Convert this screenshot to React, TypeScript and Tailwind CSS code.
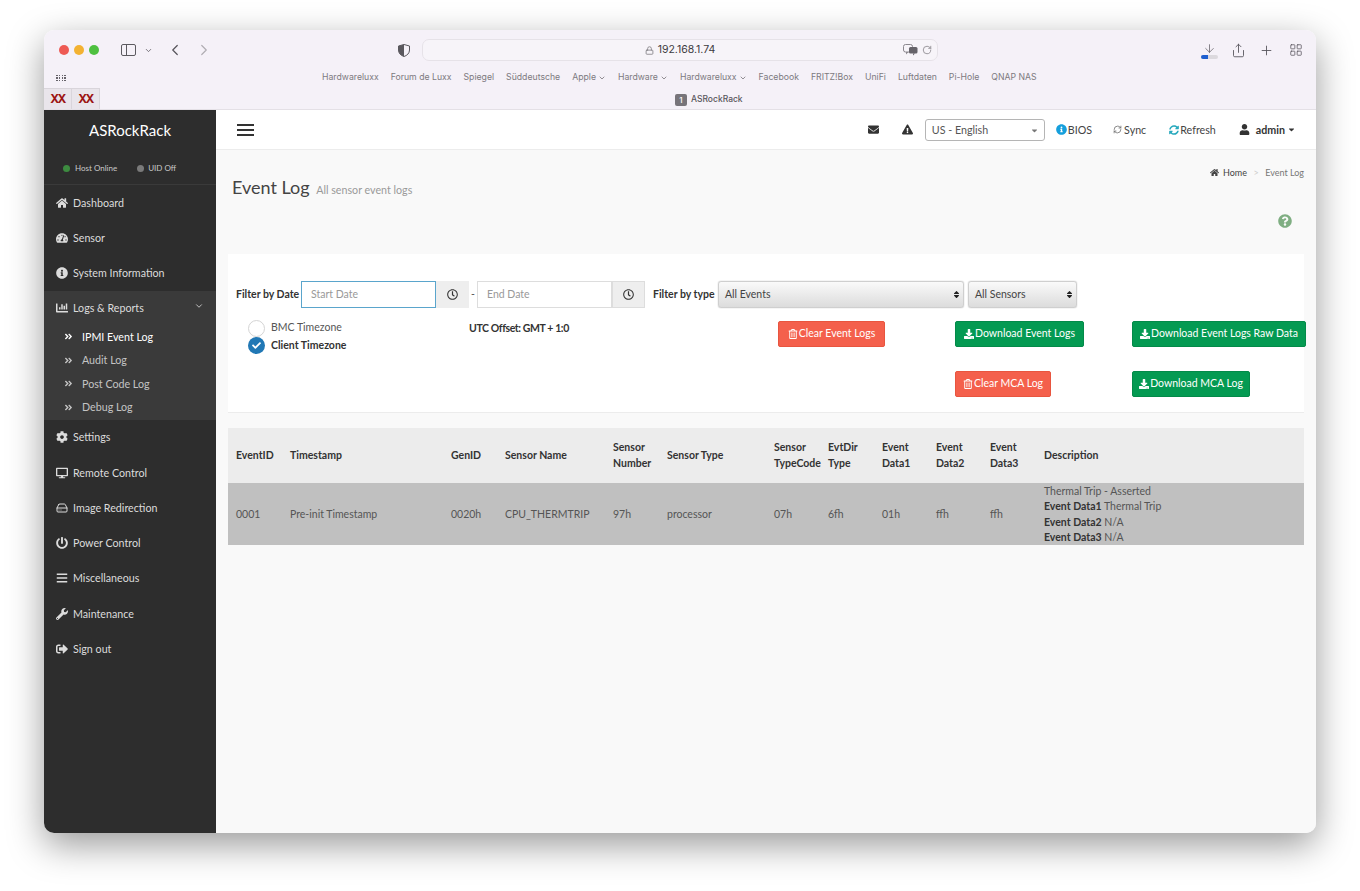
import {
  FaHome, FaTachometerAlt, FaInfoCircle, FaChartBar, FaAngleDoubleRight, FaCog, FaDesktop,
  FaPowerOff, FaBars, FaWrench, FaSignOutAlt, FaEnvelope, FaExclamationTriangle, FaSyncAlt,
  FaUser, FaQuestionCircle, FaRegTrashAlt, FaDownload, FaRegClock, FaCheck, FaCaretDown, FaSort,
} from "react-icons/fa"
import { ArrowDown, ChevronDown, ChevronLeft, ChevronRight, HardDrive, Lock, Plus, RefreshCw, RotateCw, Share, LayoutGrid } from "lucide-react"

const font = "font-['Lato','Liberation_Sans',sans-serif]"

const topMenu = [
  { label: "Dashboard", icon: <FaHome /> },
  { label: "Sensor", icon: <FaTachometerAlt /> },
  { label: "System Information", icon: <FaInfoCircle /> },
]
const bottomMenu = [
  { label: "Settings", icon: <FaCog /> },
  { label: "Remote Control", icon: <FaDesktop /> },
  { label: "Image Redirection", icon: <HardDrive size={12} strokeWidth={2} /> },
  { label: "Power Control", icon: <FaPowerOff /> },
  { label: "Miscellaneous", icon: <FaBars /> },
  { label: "Maintenance", icon: <FaWrench /> },
  { label: "Sign out", icon: <FaSignOutAlt /> },
]
const subMenu = ["IPMI Event Log", "Audit Log", "Post Code Log", "Debug Log"]
const bookmarks = [
  { label: "Hardwareluxx" }, { label: "Forum de Luxx" }, { label: "Spiegel" }, { label: "Süddeutsche" },
  { label: "Apple", menu: true }, { label: "Hardware", menu: true }, { label: "Hardwareluxx", menu: true },
  { label: "Facebook" }, { label: "FRITZ!Box" }, { label: "UniFi" }, { label: "Luftdaten" }, { label: "Pi-Hole" }, { label: "QNAP NAS" },
]
const columns = [
  { label: "EventID", width: "w-[54px]", value: "0001" },
  { label: "Timestamp", width: "w-[161px]", value: "Pre-init Timestamp" },
  { label: "GenID", width: "w-[54px]", value: "0020h" },
  { label: "Sensor Name", width: "w-[108px]", value: "CPU_THERMTRIP" },
  { label: "Sensor Number", width: "w-[54px]", value: "97h" },
  { label: "Sensor Type", width: "w-[107px]", value: "processor" },
  { label: "Sensor TypeCode", width: "w-[54px]", value: "07h" },
  { label: "EvtDir Type", width: "w-[54px]", value: "6fh" },
  { label: "Event Data1", width: "w-[54px]", value: "01h" },
  { label: "Event Data2", width: "w-[54px]", value: "ffh" },
  { label: "Event Data3", width: "w-[54px]", value: "ffh" },
]

function Toolbar() {
  return (
    <div className="h-[80px] shrink-0 bg-[#f5f1f8] border-b border-[#e4e0e6] font-['Inter',sans-serif] text-[#55525a]">
      {/* Address row */}
      <div className="h-[39px] pt-[1px] flex items-center">
        <div className="ml-[15px] flex gap-[5px]">
          <span className="w-[10px] h-[10px] rounded-full bg-[#ee5a54]" />
          <span className="w-[10px] h-[10px] rounded-full bg-[#f3b232]" />
          <span className="w-[10px] h-[10px] rounded-full bg-[#4ec040]" />
        </div>
        <div className="ml-[22px] w-[15px] h-[12px] border border-[#5c5a60] rounded-[2px] flex">
          <span className="w-[5px] border-r border-[#5c5a60]" />
        </div>
        <ChevronDown size={9} strokeWidth={2} className="ml-[8px]" />
        <ChevronLeft size={18} strokeWidth={1.6} className="ml-[13px]" />
        <ChevronRight size={18} strokeWidth={1.6} className="ml-[11px] text-[#b0adb3]" />
        <svg width="12" height="13" viewBox="0 0 12 13" className="ml-[185px]">
          <path d="M6 .5 11.5 2v4c0 3.3-2.4 5.5-5.5 6.5C2.900 11.500.5 9.300.5 6V2z" fill="none" stroke="#5a585e" />
          <path d="M6 .5 .5 2v4c0 3.300 2.400 5.500 5.500 6.500z" fill="#5a585e" />
        </svg>
        <div className="ml-[12px] w-[516px] h-[22px] rounded-[7px] border border-[#e6e2e8] bg-[#f7f4f9] flex items-center pr-[4px]">
          <div className="flex-1 flex items-center justify-center pl-[34px] gap-[4px] text-[10.500px] text-[#3d3b40]">
            <Lock size={9} className="text-[#77747a]" />
            192.168.1.74
          </div>
          <svg width="15" height="12" viewBox="0 0 15 12">
            <rect x=".5" y=".5" width="9" height="7.500" rx="2" fill="none" stroke="#8b888e" />
            <path d="M3 8v2.500L5.500 8z" fill="#8b888e" />
            <rect x="6" y="3" width="8.500" height="6.500" rx="1.500" fill="#66636a" />
            <path d="M10 9.500v2L12 9.500z" fill="#66636a" />
          </svg>
          <RotateCw size={10} className="ml-[4px] mr-[1px] text-[#8b888e]" />
        </div>
        <div className="ml-[262px] flex flex-col items-center w-[18px]">
          <ArrowDown size={13} strokeWidth={1.3} />
          <span className="w-[17px] h-[4px] rounded-full bg-[#dcd9de] overflow-hidden flex">
            <span className="w-[7px] bg-[#1e5fd0]" />
          </span>
        </div>
        <Share size={15} strokeWidth={1.4} className="ml-[13px]" />
        <Plus size={15} strokeWidth={1.4} className="ml-[13px]" />
        <LayoutGrid size={14} strokeWidth={1.3} className="ml-[15px]" />
      </div>

      {/* Bookmarks row */}
      <div className="h-[18px] flex items-center text-[8.700px] text-[#7d7a80]">
        <div className="ml-[12px] w-[10px] grid grid-cols-4 gap-px">
          {Array.from({ length: 12 }).map((_, i) => <span key={i} className="w-[1.500px] h-[1.500px] bg-[#66636a]" />)}
        </div>
        <div className="ml-[256px] flex gap-[12px]">
          {bookmarks.map((b, i) => (
            <span key={i} className="flex items-center gap-[2px] whitespace-nowrap">
              {b.label}
              {b.menu && <ChevronDown size={8} strokeWidth={2.5} />}
            </span>
          ))}
        </div>
      </div>

      {/* Tabs row */}
      <div className="h-[22px] flex items-end">
        <div className="flex h-[21px] bg-[#e9e5eb] border-t border-[#d9d5db]">
          <span className="w-[28px] flex items-center justify-center border-r border-[#d9d5db] text-[12px] font-bold text-[#9c1414] tracking-[-1.500px]">XX</span>
          <span className="w-[28px] flex items-center justify-center border-r border-[#d9d5db] text-[12px] font-bold text-[#9c1414] tracking-[-1.500px]">XX</span>
        </div>
        <div className="ml-[575px] h-[21px] pt-[2px] flex items-center gap-[4px] text-[8.500px] font-medium text-[#59565c]">
          <span className="w-[12px] h-[12px] rounded-[2px] bg-[#77747a] text-white flex items-center justify-center text-[8px]">1</span>
          ASRockRack
        </div>
      </div>
    </div>
  )
}

function Sidebar() {
  const item = "h-[35.250px] flex items-center pl-[12px] text-[#dcdcdc]"
  return (
    <aside className="w-[172px] shrink-0 bg-[#2d2d2d] text-[10.700px]">
      <div className="h-[40px] flex items-center justify-center text-white text-[15px]">ASRockRack</div>
      <div className="h-[35px] pt-[2px] flex items-center pl-[19px] text-[8px] text-[#c9c9c9] border-b border-[#3a3a3a]">
        <span className="w-[7px] h-[7px] rounded-full bg-[#3d8b40] mr-[5px]" />
        Host Online
        <span className="ml-[20px] w-[7px] h-[7px] rounded-full bg-[#7a7a7a] mr-[4px]" />
        UID Off
      </div>
      {topMenu.map((m) => (
        <div key={m.label} className={item}>
          <span className="w-[17px] text-[12px]">{m.icon}</span>{m.label}
        </div>
      ))}
      <div className="bg-[#3a3a3a] h-[129px]">
        <div className={item}>
          <span className="w-[17px] text-[12px]"><FaChartBar /></span>{"Logs & Reports"}
          <ChevronDown size={10} className="ml-auto mr-[12px] mb-[4px]" />
        </div>
        <div className="-mt-[1px]">
          {subMenu.map((s, i) => (
            <div key={s} className={`h-[23.500px] flex items-center pl-[20px] ${i === 0 ? "text-white" : "text-[#c4c4c4]"}`}>
              <FaAngleDoubleRight className="text-[9px] mr-[9px]" />{s}
            </div>
          ))}
        </div>
      </div>
      {bottomMenu.map((m) => (
        <div key={m.label} className={item}>
          <span className="w-[17px] text-[12px]">{m.icon}</span>{m.label}
        </div>
      ))}
    </aside>
  )
}

function TopBar() {
  return (
    <div className="h-[40px] shrink-0 bg-white border-b border-[#ececec] flex items-center pl-[21px] text-[10.700px] text-[#444]">
      <div className="flex flex-col gap-[3px]">
        <span className="w-[17px] h-[2px] bg-[#333]" />
        <span className="w-[17px] h-[2px] bg-[#333]" />
        <span className="w-[17px] h-[2px] bg-[#333]" />
      </div>
      <FaEnvelope className="ml-auto text-[11px] text-[#333]" />
      <FaExclamationTriangle className="ml-[23px] text-[11px] text-[#333]" />
      <div className="ml-[12px] w-[120px] h-[22px] pt-[2px] border border-[#b5b5b5] rounded-[3px] flex items-center pl-[6px] text-[#555]">
        US - English
        <FaCaretDown className="ml-auto mr-[5px] text-[9px] text-[#777]" />
      </div>
      <span className="ml-[11px] pt-[1px] flex items-center gap-[1px]"><FaInfoCircle className="text-[#159fdc] text-[11px]" />BIOS</span>
      <span className="ml-[21px] pt-[1px] flex items-center gap-[2px]"><RefreshCw size={9} className="text-[#666]" />Sync</span>
      <span className="ml-[23px] pt-[1px] flex items-center gap-[1px]"><FaSyncAlt className="text-[#28a9bd] text-[10px]" />Refresh</span>
      <span className="ml-[23px] mr-[20px] pt-[1px] flex items-center font-bold text-[#333]">
        <FaUser className="text-[11px] mr-[6px]" />admin<FaCaretDown className="ml-[2px] text-[9px]" />
      </span>
    </div>
  )
}

function Button({ color, icon, label, className }: { color: string; icon: React.ReactNode; label: string; className: string }) {
  return (
    <button className={`h-[26px] shrink-0 rounded-[2px] text-white text-[10.500px] flex items-center justify-center gap-[1px] whitespace-nowrap ${color} ${className}`}>
      {icon}{label}
    </button>
  )
}

function FilterCard() {
  const red = "bg-[#f4604c] border border-[#e8553f]"
  const green = "bg-[#049a52] border border-[#038a49]"
  const select = "h-[27px] shrink-0 rounded-[3px] border border-[#cfcfcf] bg-gradient-to-b from-[#fafafa] to-[#dcdcdc] flex items-center pl-[6px] pr-[2px] text-[#444] shadow-[0_0_1px_#999]"
  return (
    <section className="mx-[12px] mt-[28px] h-[159px] bg-white border-b border-[#ececec] text-[10.500px]">
      <div className="pt-[27px] pl-[8px] flex items-center h-[54px]">
        <b className="font-bold text-[#333] w-[65px] shrink-0 whitespace-nowrap">Filter by Date</b>
        <div className="w-[135px] shrink-0 h-[27px] border border-[#5aa5cc] pl-[9px] flex items-center text-[#999]">Start Date</div>
        <div className="w-[33px] shrink-0 h-[27px] bg-[#eeeeee] flex items-center justify-center text-[#333]"><FaRegClock className="text-[11px]" /></div>
        <span className="w-[8px] shrink-0 text-[#555] pl-[2px]">-</span>
        <div className="w-[135px] shrink-0 h-[27px] border border-[#ddd] pl-[9px] flex items-center text-[#999]">End Date</div>
        <div className="w-[33px] shrink-0 h-[27px] bg-[#eeeeee] border border-[#ddd] flex items-center justify-center text-[#333]"><FaRegClock className="text-[11px]" /></div>
        <b className="ml-[8px] w-[65px] shrink-0 font-bold text-[#333] whitespace-nowrap">Filter by type</b>
        <div className={`w-[246px] ${select}`}>All Events<FaSort className="ml-auto text-[9px] text-[#222]" /></div>
        <div className={`ml-[4px] w-[109px] ${select}`}>All Sensors<FaSort className="ml-auto text-[9px] text-[#222]" /></div>
      </div>
      <div className="flex mt-[13px]">
        <div className="ml-[20px] w-[221px] shrink-0 text-[#555]">
          <div className="h-[18px] -mt-[2px] flex items-center gap-[6px]">
            <span className="w-[17px] h-[17px] rounded-full border border-[#d4d4d4] bg-white" />BMC Timezone
          </div>
          <div className="h-[17px] flex items-center gap-[6px] font-bold text-[#333]">
            <span className="w-[17px] h-[17px] rounded-full bg-[#2178b5] flex items-center justify-center text-white text-[9px]"><FaCheck /></span>Client Timezone
          </div>
        </div>
        <div className="w-[309px] shrink-0 font-bold text-[#333] h-[14px] leading-[14px] tracking-[-0.400px]">UTC Offset: GMT + 1:0</div>
        <div className="w-[177px] shrink-0">
          <Button color={red} icon={<FaRegTrashAlt className="text-[10px]" />} label="Clear Event Logs" className="w-[107px]" />
        </div>
        <div className="w-[177px] shrink-0 flex flex-col gap-[24px]">
          <Button color={green} icon={<FaDownload className="text-[10px]" />} label="Download Event Logs" className="w-[129px]" />
          <Button color={red} icon={<FaRegTrashAlt className="text-[10px]" />} label="Clear MCA Log" className="w-[96px]" />
        </div>
        <div className="shrink-0 flex flex-col gap-[24px]">
          <Button color={green} icon={<FaDownload className="text-[10px]" />} label="Download Event Logs Raw Data" className="w-[174px]" />
          <Button color={green} icon={<FaDownload className="text-[10px]" />} label="Download MCA Log" className="w-[118px]" />
        </div>
      </div>
    </section>
  )
}

function EventTable() {
  return (
    <div className="mx-[12px] mt-[15px]">
      <table className="w-full table-fixed text-[10.500px] leading-[15.500px]">
        <thead className="bg-[#ececec] text-[#333]">
          <tr className="h-[55px]">
            {columns.map((c) => (
              <th key={c.label} className={`${c.width} px-[8px] text-left font-bold`}>{c.label}</th>
            ))}
            <th className="px-[8px] text-left font-bold">Description</th>
          </tr>
        </thead>
        <tbody className="bg-[#c0c0c0] text-[#555]">
          <tr className="h-[62px]">
            {columns.map((c) => (
              <td key={c.label} className="px-[8px] pt-[2px] whitespace-nowrap">{c.value}</td>
            ))}
            <td className="px-[8px] pt-[1px] leading-[15.250px]">
              Thermal Trip - Asserted<br />
              <b className="text-[#333]">Event Data1</b> Thermal Trip<br />
              <b className="text-[#333]">Event Data2</b> N/A<br />
              <b className="text-[#333]">Event Data3</b> N/A
            </td>
          </tr>
        </tbody>
      </table>
    </div>
  )
}

export default function App() {
  return (
    <div className={`w-[1360px] h-[891px] bg-white pt-[30px] pl-[44px] overflow-hidden ${font}`}>
      <div className="w-[1272px] h-[803px] rounded-[10px] overflow-hidden flex flex-col shadow-[0_12px_36px_rgba(0,0,0,0.4)]">
        <Toolbar />
        <div className="flex-1 flex min-h-0">
          <Sidebar />
          <main className="flex-1 bg-[#f9f9f9] flex flex-col min-w-0">
            <TopBar />
            {/* Page heading */}
            <div className="h-[64px] pl-[16px] pr-[12px] flex justify-between">
              <h1 className="pt-[26px] text-[18px] leading-[22px] text-[#444]">
                Event Log <small className="ml-[2px] text-[10.700px] text-[#999]">All sensor event logs</small>
              </h1>
              <div className="pt-[16px] text-[9px] text-[#777] flex items-start gap-[4px]">
                <FaHome className="mt-[2px] text-[#444]" />
                <span className="text-[#444]">Home</span>
                <span className="mx-[2.500px] text-[#ccc]">{">"}</span>
                Event Log
              </div>
            </div>
            <div className="h-[12px] flex justify-end pr-[24px]">
              <FaQuestionCircle className="text-[14px] text-[#7fae82]" />
            </div>
            <FilterCard />
            <EventTable />
          </main>
        </div>
      </div>
    </div>
  )
}
